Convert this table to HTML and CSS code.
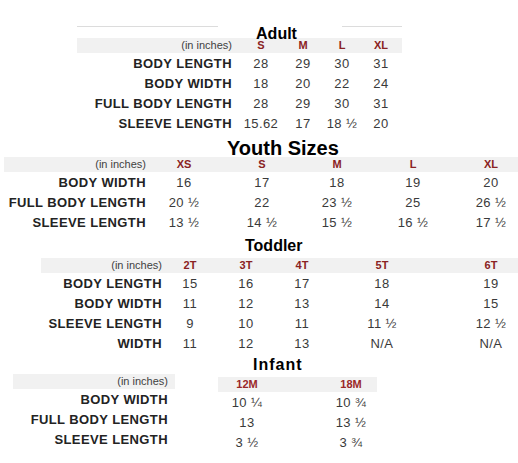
FILE: index.html
```html
<!DOCTYPE html>
<html>
<head>
<meta charset="utf-8">
<link rel="stylesheet" href="styles.css">
</head>
<body>
<div class="page">

  <section class="sec adult">
    <div class="title-row">
      <span class="rule rule-left"></span>
      <h2 class="title title-adult">Adult</h2>
      <span class="rule rule-right"></span>
    </div>
    <div class="row band"><span class="unit">(in inches)</span><span class="hd">S</span><span class="hd">M</span><span class="hd">L</span><span class="hd">XL</span></div>
    <div class="row"><span class="lbl">BODY LENGTH</span><span class="v">28</span><span class="v">29</span><span class="v">30</span><span class="v">31</span></div>
    <div class="row"><span class="lbl">BODY WIDTH</span><span class="v">18</span><span class="v">20</span><span class="v">22</span><span class="v">24</span></div>
    <div class="row"><span class="lbl">FULL BODY LENGTH</span><span class="v">28</span><span class="v">29</span><span class="v">30</span><span class="v">31</span></div>
    <div class="row"><span class="lbl">SLEEVE LENGTH</span><span class="v">15.62</span><span class="v">17</span><span class="v">18 ½</span><span class="v">20</span></div>
  </section>

  <section class="sec youth">
    <h2 class="title title-youth">Youth Sizes</h2>
    <div class="row band"><span class="unit">(in inches)</span><span class="hd">XS</span><span class="hd">S</span><span class="hd">M</span><span class="hd">L</span><span class="hd">XL</span></div>
    <div class="row"><span class="lbl">BODY WIDTH</span><span class="v">16</span><span class="v">17</span><span class="v">18</span><span class="v">19</span><span class="v">20</span></div>
    <div class="row"><span class="lbl">FULL BODY LENGTH</span><span class="v">20 ½</span><span class="v">22</span><span class="v">23 ½</span><span class="v">25</span><span class="v">26 ½</span></div>
    <div class="row"><span class="lbl">SLEEVE LENGTH</span><span class="v">13 ½</span><span class="v">14 ½</span><span class="v">15 ½</span><span class="v">16 ½</span><span class="v">17 ½</span></div>
  </section>

  <section class="sec toddler">
    <h2 class="title title-toddler">Toddler</h2>
    <div class="row band"><span class="unit">(in inches)</span><span class="hd">2T</span><span class="hd">3T</span><span class="hd">4T</span><span class="hd">5T</span><span class="hd">6T</span></div>
    <div class="row"><span class="lbl">BODY LENGTH</span><span class="v">15</span><span class="v">16</span><span class="v">17</span><span class="v">18</span><span class="v">19</span></div>
    <div class="row"><span class="lbl">BODY WIDTH</span><span class="v">11</span><span class="v">12</span><span class="v">13</span><span class="v">14</span><span class="v">15</span></div>
    <div class="row"><span class="lbl">SLEEVE LENGTH</span><span class="v">9</span><span class="v">10</span><span class="v">11</span><span class="v">11 ½</span><span class="v">12 ½</span></div>
    <div class="row"><span class="lbl">WIDTH</span><span class="v">11</span><span class="v">12</span><span class="v">13</span><span class="v">N/A</span><span class="v">N/A</span></div>
  </section>

  <section class="sec infant">
    <h2 class="title title-infant">Infant</h2>
    <div class="inf-body">
      <div class="inf-labels">
        <div class="irow band"><span class="unit">(in inches)</span></div>
        <div class="irow"><span class="lbl">BODY WIDTH</span></div>
        <div class="irow"><span class="lbl">FULL BODY LENGTH</span></div>
        <div class="irow"><span class="lbl">SLEEVE LENGTH</span></div>
      </div>
      <div class="inf-vals">
        <div class="vrow band"><span class="hd hd-inf">12M</span><span class="hd hd-inf">18M</span></div>
        <div class="vrow"><span class="v">10 ¼</span><span class="v">10 ¾</span></div>
        <div class="vrow"><span class="v">13</span><span class="v">13 ½</span></div>
        <div class="vrow"><span class="v">3 ½</span><span class="v">3 ¾</span></div>
      </div>
    </div>
  </section>

</div>
</body>
</html>
```

FILE: styles.css
```css
html, body {
  margin: 0;
  padding: 0;
  background: #ffffff;
  overflow: hidden;
}

.page {
  width: 518px;
  height: 463px;
  overflow: hidden;
  padding-top: 24px;
  box-sizing: border-box;
  font-family: "Liberation Sans", Arial, sans-serif;
}

.sec {
  display: block;
}

.title {
  margin: 0;
  font-weight: bold;
  color: #000;
  white-space: nowrap;
}

/* ---------- rows ---------- */
.row {
  display: grid;
  height: 20px;
  align-items: center;
}

.row.band,
.irow.band,
.vrow.band {
  height: 15px;
  background: #f1f1f1;
}

.unit {
  font-size: 11px;
  color: #3f3f3f;
  text-align: right;
  line-height: 15px;
  white-space: nowrap;
}

.hd {
  font-size: 11px;
  font-weight: bold;
  color: #8a2222;
  text-align: center;
  line-height: 15px;
}

.hd-inf {
  color: #9a2828;
}

.lbl {
  font-size: 13px;
  letter-spacing: 0.4px;
  font-weight: bold;
  color: #232323;
  text-align: right;
  white-space: nowrap;
}

.v {
  font-size: 13px;
  letter-spacing: 0.4px;
  color: #3a3a3a;
  text-align: center;
  white-space: nowrap;
}

/* ---------- adult ---------- */
.adult {
  margin-left: 77px;
  width: 325px;
}

.adult .title-row {
  display: flex;
  height: 14px;
}

.rule {
  display: block;
  height: 0;
  margin-top: 2px;
  border-top: 1px solid #dcdcdc;
}

.rule-left { width: 141px; }
.rule-right { width: 60px; }

.title-adult {
  flex: 1;
  font-size: 16px;
  line-height: 16px;
  padding-top: 2px;
  padding-right: 7px;
  text-align: center;
  height: 12px;
}

.adult .row {
  grid-template-columns: 163px 42px 42px 36px 42px;
}

.adult .unit,
.adult .lbl {
  padding-right: 8px;
}

/* ---------- youth ---------- */
.youth {
  margin-left: 4px;
  width: 526px;
}

.title-youth {
  height: 19px;
  padding-top: 5px;
  margin-left: 223px;
  font-size: 20px;
  line-height: 20px;
}

.youth .row {
  grid-template-columns: 144px 72px 84px 66px 86px 70px;
}

.youth .unit,
.youth .lbl {
  padding-right: 2px;
}

/* ---------- toddler ---------- */
.toddler {
  margin-left: 41px;
  width: 505px;
}

.title-toddler {
  height: 20px;
  padding-top: 6px;
  margin-left: 204px;
  font-size: 16px;
  line-height: 16px;
}

.toddler .row {
  grid-template-columns: 123px 52px 60px 52px 108px 110px;
}

.toddler .unit,
.toddler .lbl {
  padding-right: 2px;
}

/* ---------- infant ---------- */
.title-infant {
  height: 17px;
  padding-top: 4px;
  margin-left: 253px;
  font-size: 16px;
  line-height: 16px;
  letter-spacing: 1px;
}

.inf-body {
  display: flex;
  align-items: flex-start;
}

.inf-labels {
  margin-left: 13px;
  width: 162px;
}

.irow {
  display: flex;
  justify-content: flex-end;
  align-items: center;
  height: 20px;
  padding-right: 7px;
}

.inf-vals {
  margin-left: 43px;
  margin-top: 3px;
  width: 159px;
}

.vrow {
  display: grid;
  grid-template-columns: 58px 52px;
  column-gap: 49px;
  align-items: center;
  height: 20px;
}
```
